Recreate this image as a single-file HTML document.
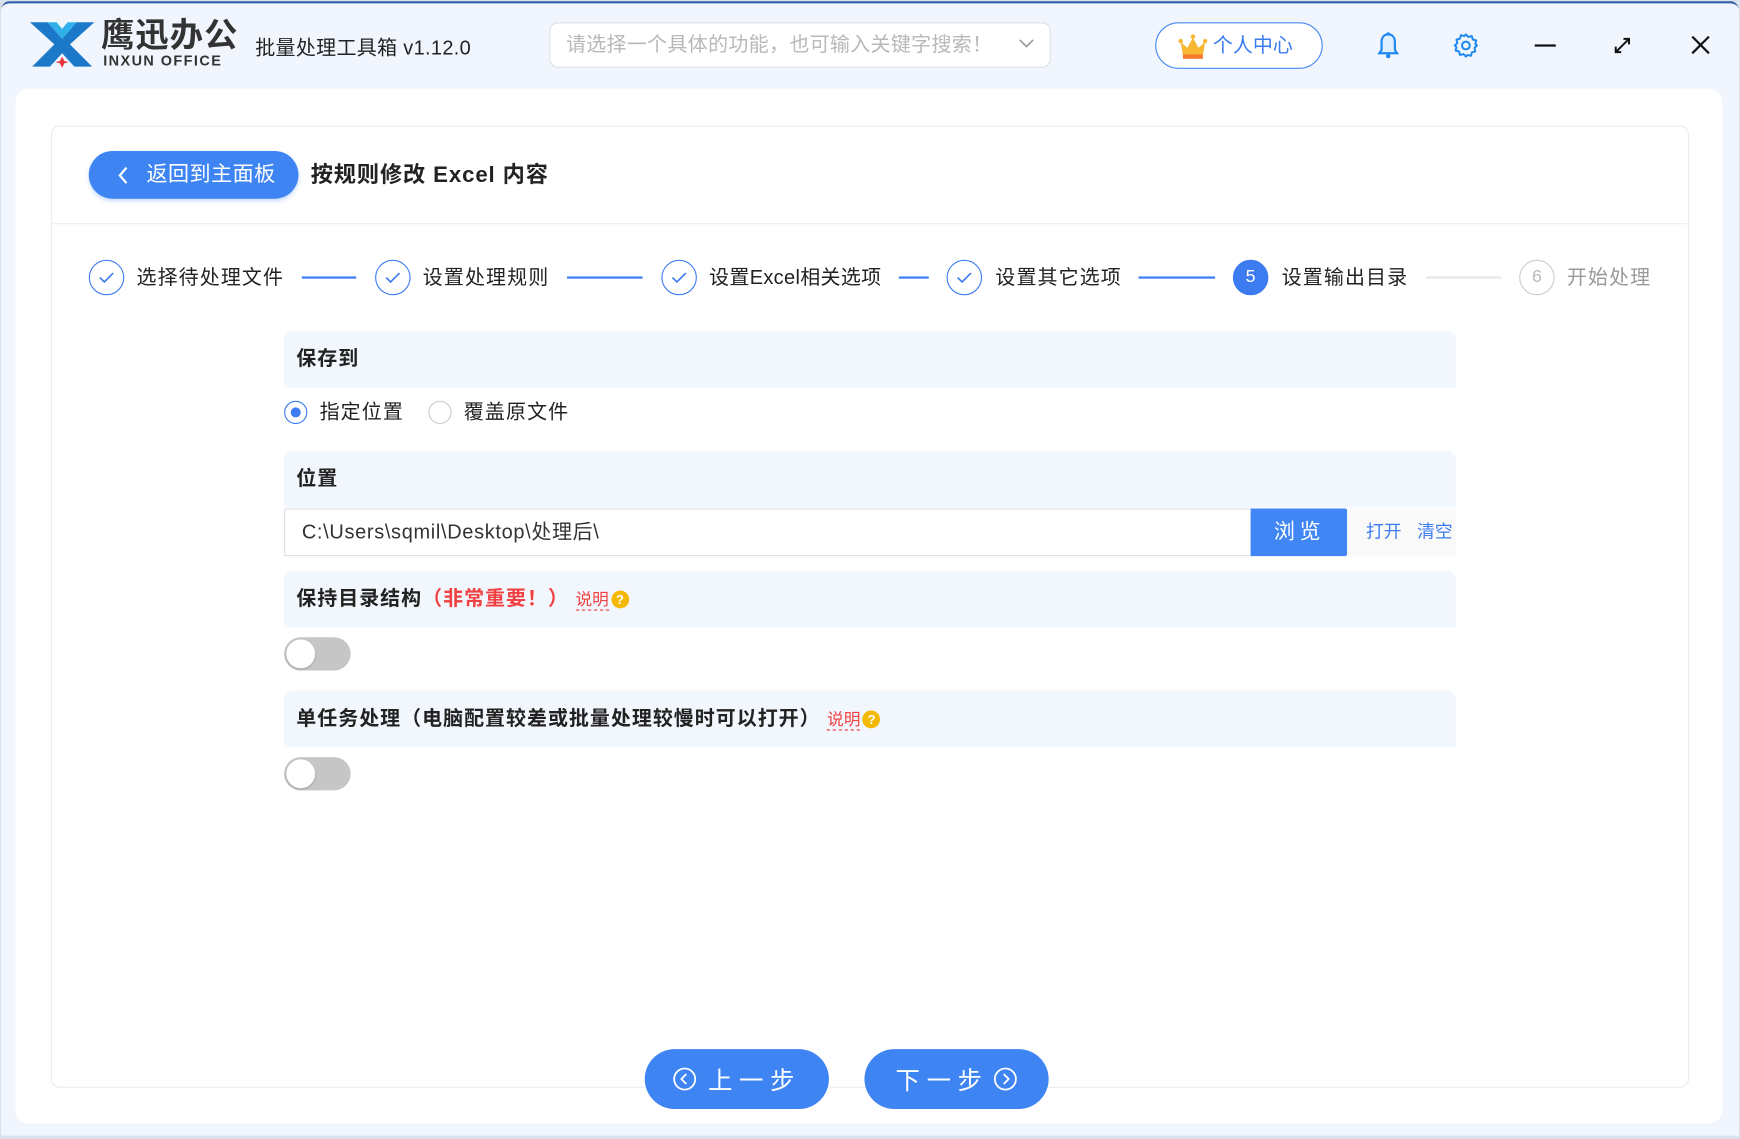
<!DOCTYPE html>
<html><head><meta charset="utf-8"><style>
*{margin:0;padding:0;box-sizing:border-box}
body{width:1740px;height:1139px;overflow:hidden;background:#d9e1ea;font-family:"Liberation Sans","Noto Sans CJK SC",sans-serif;}
#w{position:absolute;left:0;top:0;width:1568px;height:1026px;transform:scale(1.10969,1.11014);transform-origin:0 0;}
.a{position:absolute}
.win{left:1px;top:1px;width:1566px;height:1022px;background:#f1f6fe;border-top:2px solid #2d5fa6;border-radius:8px 8px 0 0}
.t{white-space:nowrap;line-height:1}
.sec{position:absolute;left:256px;width:1056px;height:51px;background:#f2f6fd;border-radius:8px 8px 0 0;font-size:18px;font-weight:bold;color:#222;padding-left:11px;line-height:51px;letter-spacing:0.9px}
.circ{position:absolute;width:32px;height:32px;border-radius:50%;border:1.5px solid #3d7cf0;display:flex;align-items:center;justify-content:center;top:234px}
.st{position:absolute;top:240px;font-size:18px;color:#222;white-space:nowrap;line-height:20px;letter-spacing:1px}
.ln{position:absolute;top:249px;height:1.5px;background:#3d7cf0}
.tog{position:absolute;left:256px;width:60px;height:30px;border-radius:15px;background:#c6c6c6}
.tog:after{content:"";position:absolute;left:2px;top:2px;width:26px;height:26px;border-radius:50%;background:#fff;box-shadow:0 1px 2px rgba(0,0,0,.2)}
.sm{font-size:15px;color:#f04040;font-weight:normal;border-bottom:1.5px dashed #f04040;line-height:16px;display:inline-block;letter-spacing:0}
.q{display:inline-block;width:16px;height:16px;border-radius:50%;background:#f5b800;color:#fff;font-size:12px;line-height:16px;text-align:center;vertical-align:1px;margin-left:2px;letter-spacing:0}
.btn{position:absolute;top:945px;width:166px;height:54px;border-radius:27px;background:#3f84f3;color:#fff;font-size:22px;display:flex;align-items:center;justify-content:center;letter-spacing:6px}
</style></head><body><div id="w">
<div class="a win"></div>
<svg class="a" style="left:25px;top:18px" width="62" height="44" viewBox="0 0 62 44">
<path d="M2 2h16l13 15 13-15h16L38 22l20 20H42L31 30 20 42H4l20-20z" fill="#1c78c8"/>
<path d="M18 2l13 15 13-15h-8l-5 6-5-6z" fill="#2fb0ea"/>
<path d="M31 33l2 4 4 1-4 1-2 4-2-4-4-1 4-1z" fill="#e8343a"/>
</svg>
<div class="a t" style="left:91px;top:18px;font-size:30px;font-weight:bold;color:#333;letter-spacing:1px">鹰迅办公</div>
<div class="a t" style="left:93px;top:48px;font-size:13px;font-weight:bold;color:#333;letter-spacing:1.3px">INXUN OFFICE</div>
<div class="a t" style="left:230px;top:34px;font-size:18px;color:#222;letter-spacing:0.3px">批量处理工具箱 v1.12.0</div>
<div class="a" style="left:495px;top:20px;width:452px;height:41px;background:#fff;border:1px solid #dcdfe6;border-radius:8px"></div>
<div class="a t" style="left:510px;top:31px;font-size:18px;color:#b8b8b8;letter-spacing:0.3px">请选择一个具体的功能，也可输入关键字搜索！</div>
<svg class="a" style="left:918px;top:34px" width="14" height="10"><path d="M1 2l6 6 6-6" stroke="#999" stroke-width="1.5" fill="none"/></svg>
<div class="a" style="left:1041px;top:20px;width:151px;height:42px;border:1px solid #4a8af4;border-radius:21px;background:#fff"></div>
<svg class="a" style="left:1062px;top:30px" width="26" height="24" viewBox="0 0 26 24"><path d="M2 8l6 5 5-9 5 9 6-5-2 12H4z" fill="#f7b733"/><rect x="4" y="19" width="18" height="4" fill="#f47a30"/><circle cx="2" cy="7" r="2" fill="#f7b733"/><circle cx="24" cy="7" r="2" fill="#f7b733"/><circle cx="13" cy="3" r="2" fill="#f7b733"/></svg>
<div class="a t" style="left:1093px;top:32px;font-size:18px;color:#3d7cf0">个人中心</div>
<svg class="a" style="left:1240px;top:28px" width="22" height="26" viewBox="0 0 22 26"><path d="M11 3c-4 0-6 3-6 7v7l-2 3h16l-2-3v-7c0-4-2-7-6-7z" fill="#e0efff" stroke="#1e8af0" stroke-width="2"/><circle cx="11" cy="2.5" r="1.5" fill="#1e8af0"/><circle cx="11" cy="22.5" r="2" fill="#1e8af0"/></svg>
<svg class="a" style="left:1309px;top:29px" width="24" height="24" viewBox="0 0 24 24"><path d="M12 2l2.2 2.3 3.1-.8 .9 3.1 3.1.9-.8 3.1L22 12l-2.3 2.2.8 3.1-3.1.9-.9 3.1-3.1-.8L12 22l-2.2-2.3-3.1.8-.9-3.1-3.1-.9.8-3.1L2 12l2.3-2.2-.8-3.1 3.1-.9.9-3.1 3.1.8z" fill="none" stroke="#1e8af0" stroke-width="1.8" stroke-linejoin="round"/><circle cx="12" cy="12" r="3.5" fill="none" stroke="#1e8af0" stroke-width="1.8"/></svg>
<div class="a" style="left:1383px;top:40px;width:19px;height:2px;background:#111"></div>
<svg class="a" style="left:1452px;top:31px" width="20" height="20" viewBox="0 0 20 20"><path d="M4 16L16 4M11 4h5v5M4 11v5h5" stroke="#111" stroke-width="1.8" fill="none"/></svg>
<svg class="a" style="left:1523px;top:31px" width="19" height="19"><path d="M2 2l15 15M17 2L2 17" stroke="#111" stroke-width="2"/></svg>
<div class="a" style="left:14px;top:80px;width:1538px;height:932px;background:#fff;border-radius:12px"></div>
<div class="a" style="left:46px;top:113px;width:1476px;height:867px;border:1px solid #e9ebef;border-radius:8px"></div>
<div class="a" style="left:80px;top:136px;width:189px;height:43px;border-radius:22px;background:#3f84f3;box-shadow:0 2px 4px rgba(63,132,243,.3)"></div>
<svg class="a" style="left:105px;top:149px" width="12" height="18"><path d="M9 2L3 9l6 7" stroke="#fff" stroke-width="2" fill="none"/></svg>
<div class="a t" style="left:132px;top:148px;font-size:19px;color:#fff;letter-spacing:0.4px">返回到主面板</div>
<div class="a t" style="left:280px;top:148px;font-size:20px;font-weight:bold;color:#222;letter-spacing:0.8px">按规则修改 Excel 内容</div>
<div class="a" style="left:47px;top:201px;width:1474px;height:1px;background:#ebedf0"></div>
<div class="circ" style="left:80px"><svg width="16" height="12"><path d="M2 6l4 4 8-8" stroke="#3d7cf0" stroke-width="1.5" fill="none"/></svg></div>
<div class="st" style="left:123px">选择待处理文件</div>
<div class="ln" style="left:272px;width:49px"></div>
<div class="circ" style="left:338px"><svg width="16" height="12"><path d="M2 6l4 4 8-8" stroke="#3d7cf0" stroke-width="1.5" fill="none"/></svg></div>
<div class="st" style="left:381px">设置处理规则</div>
<div class="ln" style="left:511px;width:68px"></div>
<div class="circ" style="left:596px"><svg width="16" height="12"><path d="M2 6l4 4 8-8" stroke="#3d7cf0" stroke-width="1.5" fill="none"/></svg></div>
<div class="st" style="left:639px;letter-spacing:0.3px">设置Excel相关选项</div>
<div class="ln" style="left:810px;width:27px"></div>
<div class="circ" style="left:853px"><svg width="16" height="12"><path d="M2 6l4 4 8-8" stroke="#3d7cf0" stroke-width="1.5" fill="none"/></svg></div>
<div class="st" style="left:897px">设置其它选项</div>
<div class="ln" style="left:1026px;width:69px"></div>
<div class="circ" style="left:1111px;background:#3d7cf0;color:#fff;font-size:16px">5</div>
<div class="st" style="left:1155px">设置输出目录</div>
<div class="ln" style="left:1285px;width:68px;background:#e8e8e8"></div>
<div class="circ" style="left:1369px;border-color:#ccc;color:#bbb;font-size:16px">6</div>
<div class="st" style="left:1412px;color:#999">开始处理</div>
<div class="sec" style="top:298px">保存到</div>
<div class="a" style="left:256px;top:361px;width:21px;height:21px;border-radius:50%;border:1.5px solid #3d7cf0"></div>
<div class="a" style="left:262px;top:367px;width:9px;height:9px;border-radius:50%;background:#3d7cf0"></div>
<div class="a t" style="left:288px;top:362px;font-size:18px;color:#222;letter-spacing:1px">指定位置</div>
<div class="a" style="left:386px;top:361px;width:21px;height:21px;border-radius:50%;border:1px solid #ccc"></div>
<div class="a t" style="left:418px;top:362px;font-size:18px;color:#222;letter-spacing:1px">覆盖原文件</div>
<div class="sec" style="top:406px">位置</div>
<div class="a" style="left:256px;top:458px;width:872px;height:43px;border:1px solid #dcdfe6;background:#fff"></div>
<div class="a t" style="left:272px;top:470px;font-size:18px;color:#333;letter-spacing:0.6px">C:\Users\sqmil\Desktop\处理后\</div>
<div class="a" style="left:1127px;top:458px;width:87px;height:43px;background:#4186f5;border-radius:0 2px 2px 0"></div>
<div class="a t" style="left:1148px;top:470px;font-size:19px;color:#fff;letter-spacing:4px">浏览</div>
<div class="a" style="left:1214px;top:458px;width:98px;height:43px;background:#fafafa"></div>
<div class="a t" style="left:1231px;top:472px;font-size:16px;color:#3d7cf0">打开</div>
<div class="a t" style="left:1277px;top:472px;font-size:16px;color:#3d7cf0">清空</div>
<div class="sec" style="top:514px">保持目录结构<span style="color:#f04040">（非常重要！）</span> <span class="sm">说明</span><span class="q">?</span></div>
<div class="tog" style="top:574px"></div>
<div class="sec" style="top:622px">单任务处理（电脑配置较差或批量处理较慢时可以打开） <span class="sm">说明</span><span class="q">?</span></div>
<div class="tog" style="top:682px"></div>
<div class="btn" style="left:581px"><svg width="22" height="22" style="margin-right:10px"><circle cx="11" cy="11" r="9.5" stroke="#fff" stroke-width="1.6" fill="none"/><path d="M12.5 6.5L8 11l4.5 4.5" stroke="#fff" stroke-width="1.6" fill="none"/></svg>上一步</div>
<div class="btn" style="left:779px">下一步<svg width="22" height="22" style="margin-left:4px"><circle cx="11" cy="11" r="9.5" stroke="#fff" stroke-width="1.6" fill="none"/><path d="M9.5 6.5L14 11l-4.5 4.5" stroke="#fff" stroke-width="1.6" fill="none"/></svg></div>
</div></body></html>
